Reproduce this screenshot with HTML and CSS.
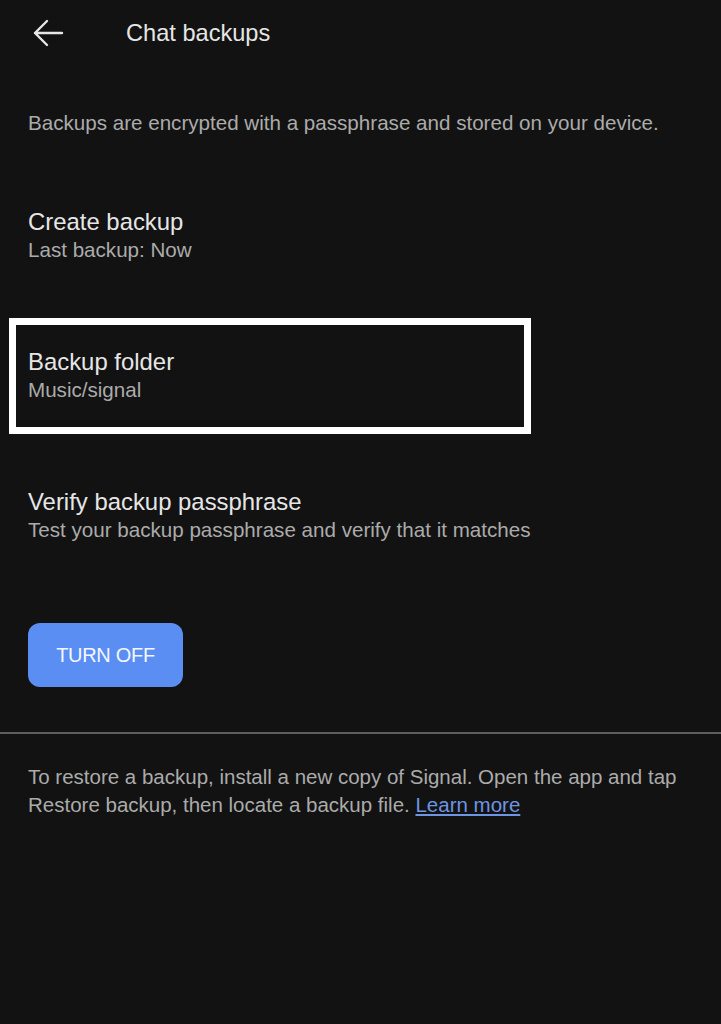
FILE: index.html
```html
<!DOCTYPE html>
<html>
<head>
<meta charset="utf-8">
<link rel="stylesheet" href="styles.css">
</head>
<body>
<div class="page">
  <header class="toolbar">
    <svg class="back" width="32" height="28" viewBox="0 0 32 28">
      <path d="M30 14H3M15 2L3 14l12 12" fill="none" stroke="#e6e6e6" stroke-width="2.4" stroke-linecap="round" stroke-linejoin="round"/>
    </svg>
    <h1 class="title">Chat backups</h1>
  </header>
  <p class="intro">Backups are encrypted with a passphrase and stored on your device.</p>
  <div class="item item-first">
    <div class="item-title">Create backup</div>
    <div class="item-sub">Last backup: Now</div>
  </div>
  <div class="item item-highlight">
    <div class="item-title">Backup folder</div>
    <div class="item-sub">Music/signal</div>
  </div>
  <div class="item item-last">
    <div class="item-title">Verify backup passphrase</div>
    <div class="item-sub">Test your backup passphrase and verify that it matches</div>
  </div>
  <div class="actions">
    <button class="btn">TURN OFF</button>
  </div>
  <hr class="divider">
  <p class="footer">To restore a backup, install a new copy of Signal. Open the app and tap<br>Restore backup, then locate a backup file. <a class="link" href="#">Learn more</a></p>
</div>
</body>
</html>
```
FILE: styles.css
```css
html, body {
  margin: 0;
  padding: 0;
  background: #121212;
}
body {
  font-family: "Liberation Sans", Arial, sans-serif;
  color: #e6e6e6;
  width: 721px;
  height: 1024px;
  overflow: hidden;
}
.page {
  display: flex;
  flex-direction: column;
}
.toolbar {
  display: flex;
  align-items: center;
  height: 66px;
  padding-left: 32px;
}
.back {
  display: block;
}
.title {
  margin: 0 0 0 62px;
  font-size: 23.6px;
  font-weight: 400;
  color: #e6e6e6;
}
.intro {
  margin: 44px 28px 0 28px;
  font-size: 20.6px;
  line-height: 26px;
  color: #ababab;
}
.item {
  display: flex;
  flex-direction: column;
  padding: 0 28px;
}
.item-first {
  margin-top: 72px;
}
.item-title {
  font-size: 23.9px;
  line-height: 28px;
  color: #e6e6e6;
}
.item-sub {
  font-size: 20.6px;
  line-height: 28px;
  color: #ababab;
}
.item-highlight {
  margin: 54px 190px 0 9px;
  border: 7px solid #ffffff;
  padding: 23px 12px 23px 12px;
}
.item-last {
  margin-top: 54px;
}
.actions {
  padding: 0 28px;
  margin-top: 79px;
}
.btn {
  width: 155px;
  height: 64px;
  border: 0;
  border-radius: 12px;
  background: #5b8ef2;
  color: #f4f7ff;
  font-family: inherit;
  font-size: 20px;
  letter-spacing: -0.3px;
}
.divider {
  margin: 45px 0 0 0;
  border: 0;
  height: 2px;
  background: #5e5e5e;
}
.footer {
  margin: 29px 28px 0 28px;
  font-size: 20.5px;
  line-height: 28px;
  color: #ababab;
}
.link {
  color: #6e95e2;
  text-decoration: underline;
}
```
